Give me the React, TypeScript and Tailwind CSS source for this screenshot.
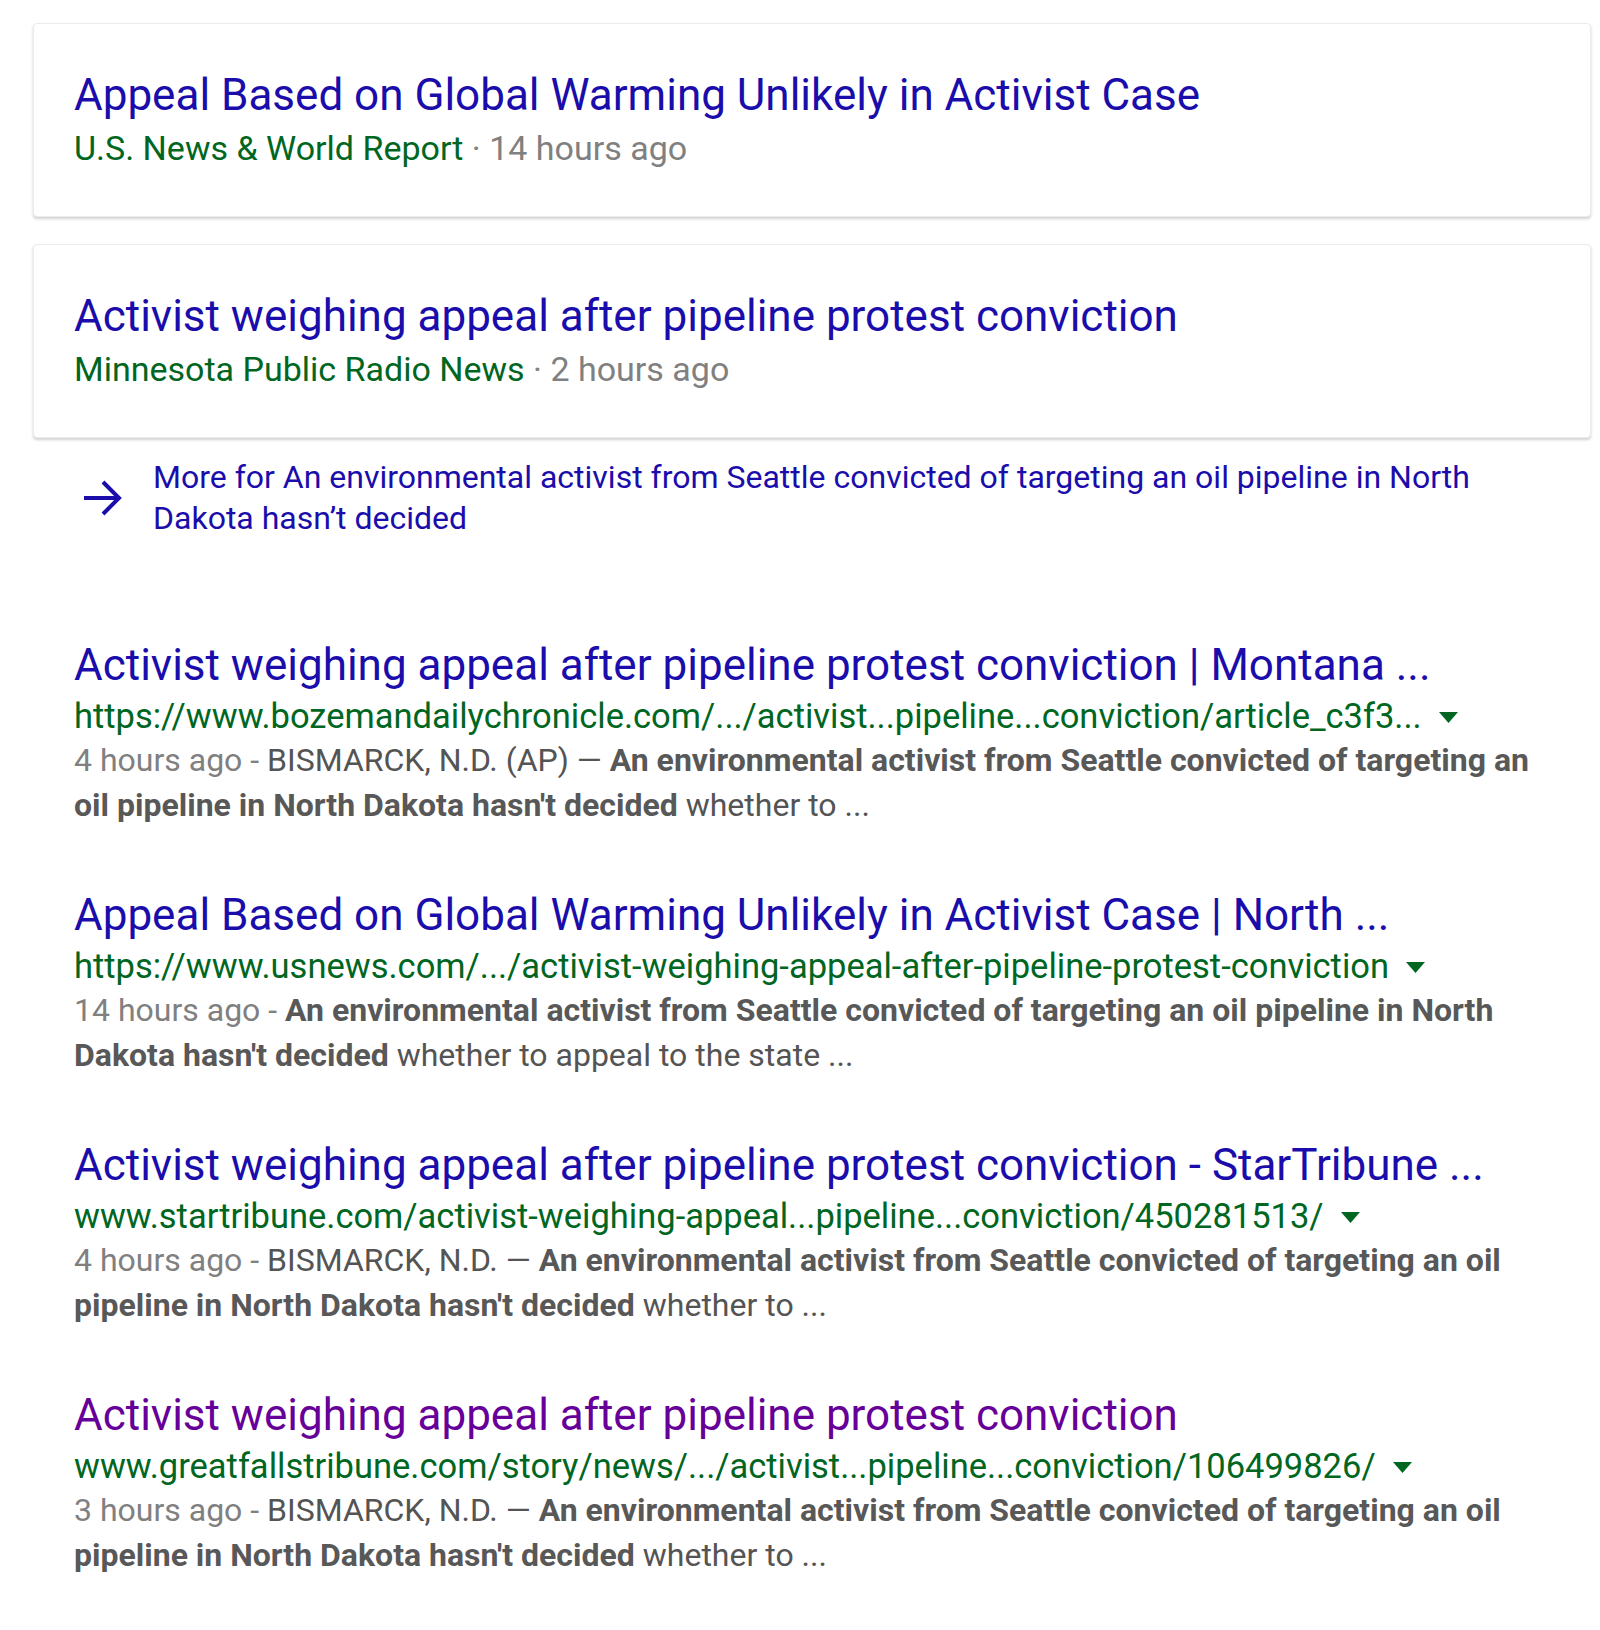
import React from 'react'

type Story = { title: string; source: string; time: string }
type Result = {
  title: string
  url: string
  visited?: boolean
  date: string
  lead: string
  bold: string[]
  rest: string
}

const stories: Story[] = [
  {
    title: 'Appeal Based on Global Warming Unlikely in Activist Case',
    source: 'U.S. News & World Report',
    time: '14 hours ago',
  },
  {
    title: 'Activist weighing appeal after pipeline protest conviction',
    source: 'Minnesota Public Radio News',
    time: '2 hours ago',
  },
]

const results: Result[] = [
  {
    title: 'Activist weighing appeal after pipeline protest conviction | Montana ...',
    url: 'https://www.bozemandailychronicle.com/.../activist...pipeline...conviction/article_c3f3...',
    date: '4 hours ago',
    lead: 'BISMARCK, N.D. (AP) — ',
    bold: ['An environmental activist from Seattle convicted of targeting an', 'oil pipeline in North Dakota hasn\'t decided'],
    rest: ' whether to ...',
  },
  {
    title: 'Appeal Based on Global Warming Unlikely in Activist Case | North ...',
    url: 'https://www.usnews.com/.../activist-weighing-appeal-after-pipeline-protest-conviction',
    date: '14 hours ago',
    lead: '',
    bold: ['An environmental activist from Seattle convicted of targeting an oil pipeline in North', 'Dakota hasn\'t decided'],
    rest: ' whether to appeal to the state ...',
  },
  {
    title: 'Activist weighing appeal after pipeline protest conviction - StarTribune ...',
    url: 'www.startribune.com/activist-weighing-appeal...pipeline...conviction/450281513/',
    date: '4 hours ago',
    lead: 'BISMARCK, N.D. — ',
    bold: ['An environmental activist from Seattle convicted of targeting an oil', 'pipeline in North Dakota hasn\'t decided'],
    rest: ' whether to ...',
  },
  {
    title: 'Activist weighing appeal after pipeline protest conviction',
    url: 'www.greatfallstribune.com/story/news/.../activist...pipeline...conviction/106499826/',
    visited: true,
    date: '3 hours ago',
    lead: 'BISMARCK, N.D. — ',
    bold: ['An environmental activist from Seattle convicted of targeting an oil', 'pipeline in North Dakota hasn\'t decided'],
    rest: ' whether to ...',
  },
]

const StoryCard: React.FC<{ story: Story }> = ({ story }) => (
  <div className="bg-white rounded-[4px] border border-[#ececec] shadow-[0_2px_3px_rgba(0,0,0,0.18)] pl-[40px] pt-[42px] pb-[44px]">
    <a className="block text-[44px] leading-[58px] text-[#1a0dab] whitespace-nowrap">{story.title}</a>
    <div className="text-[34px] leading-[48px] whitespace-nowrap">
      <span className="text-[#006621]">{story.source}</span>
      <span className="text-[#808080]"> · {story.time}</span>
    </div>
  </div>
)

const ResultItem: React.FC<{ r: Result }> = ({ r }) => (
  <div className="pl-[41px]">
    <a
      className={`block text-[44px] leading-[58px] whitespace-nowrap ${
        r.visited ? 'text-[#660099]' : 'text-[#1a0dab]'
      }`}
    >
      {r.title}
    </a>
    <div className="flex items-center text-[34.5px] leading-[44px] text-[#006621] whitespace-nowrap">
      <span>{r.url}</span>
      {/* dropdown caret */}
      <svg className="ml-[17px] mt-[2px] w-[19px] h-[11px]" viewBox="0 0 19 11" fill="#006621">
        <path d="M0 0h19L9.5 11z" />
      </svg>
    </div>
    <p className="text-[32px] leading-[45px] text-[#545454] whitespace-nowrap">
      <span className="text-[#808080]">{r.date} - </span>
      {r.lead}
      <b className="font-bold text-[#585858]">{r.bold[0]}</b>
      <br />
      <b className="font-bold text-[#585858]">{r.bold[1]}</b>
      {r.rest}
    </p>
  </div>
)

export default function App() {
  return (
    <div className="min-h-[1630px] bg-white pl-[33px] pr-[9px] pt-[23px] font-['Roboto',Arial,sans-serif]">
      <div className="flex flex-col gap-[27px]">
        {stories.map((s) => (
          <StoryCard key={s.title} story={s} />
        ))}
      </div>

      {/* More stories link */}
      <div className="flex items-center mt-[19px] pl-[50px] gap-[31px]">
        <svg className="w-[39px] h-[38px] shrink-0" viewBox="0 0 39 38" fill="none" stroke="#1a0dab" strokeWidth="4">
          <path d="M1 19h35" />
          <path d="M20 3l16 16-16 16" />
        </svg>
        <p className="text-[32px] leading-[41px] text-[#1a0dab]">
          More for An environmental activist from Seattle convicted of targeting an oil pipeline in North
          <br />
          Dakota hasn’t decided
        </p>
      </div>

      <div className="flex flex-col gap-[58px] mt-[97px]">
        {results.map((r) => (
          <ResultItem key={r.url} r={r} />
        ))}
      </div>
    </div>
  )
}
